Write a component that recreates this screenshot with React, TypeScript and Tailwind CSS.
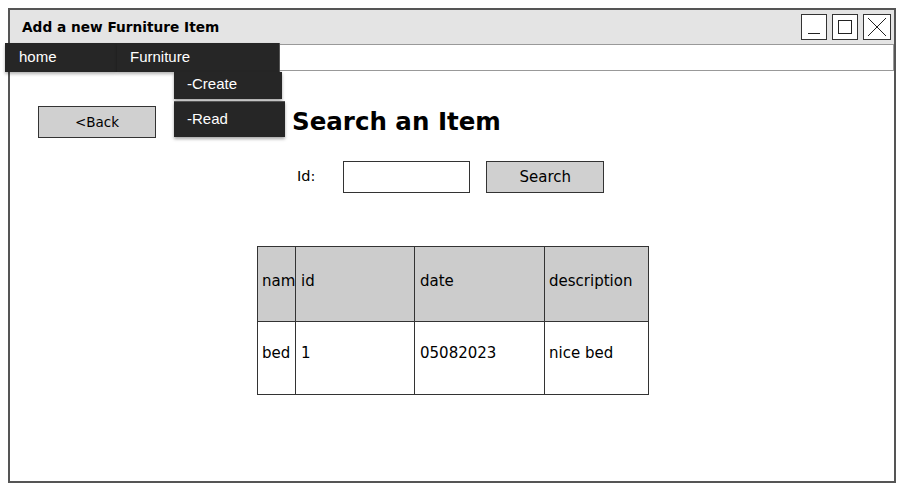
import React from "react";

const comic = { fontFamily: '"Comic Sans MS", "DejaVu Sans", sans-serif' };

const rows = [{ name: "bed", id: "1", date: "05082023", description: "nice bed" }];

const WindowButtons = () => (
  <div className="flex gap-[5px] mr-[3px]">
    <div className="w-[26px] h-[26px] border border-[#333] bg-white flex items-end justify-center pb-[5px]">
      <div className="w-[12px] h-[1px] bg-[#222]" />
    </div>
    <div className="w-[26px] h-[26px] border border-[#333] bg-white flex items-center justify-center">
      <div className="w-[14px] h-[14px] border border-[#222]" />
    </div>
    <div className="w-[28px] h-[26px] border border-[#333] bg-white flex items-center justify-center">
      <svg width="20" height="20" viewBox="0 0 20 20">
        <path d="M1 1 L19 19 M19 1 L1 19" stroke="#222" strokeWidth="1" fill="none" />
      </svg>
    </div>
  </div>
);

const App = () => {
  return (
    <main className="w-[903px] h-[490px] bg-white pt-[8px] pl-[8px] pr-[7px] pb-[7px]">
      <div className="h-[475px] border-2 border-[#555] flex flex-col">
        {/* title bar */}
        <div className="h-[34px] bg-[#e4e4e4] flex items-center justify-between pl-[12px] shrink-0">
          <span className="text-[13.7px] font-bold text-black" style={comic}>
            Add a new Furniture Item
          </span>
          <WindowButtons />
        </div>

        {/* menu bar */}
        <div
          className="relative h-[29px] flex -ml-[5px] -mt-[1px] shrink-0"
          style={{ fontFamily: '"Liberation Sans", Arial, sans-serif' }}
        >
          <div className="w-[112px] bg-[#262626] text-white text-[15px] flex items-center pl-[14px] shadow-[0_2px_3px_rgba(0,0,0,0.3)]">
            home
          </div>
          <div className="w-[163px] bg-[#262626] text-white text-[15px] flex items-center pl-[13px] border-r border-[#555] shadow-[0_2px_3px_rgba(0,0,0,0.3)]">
            Furniture
          </div>
          <div className="flex-1 border-t border-b border-r border-[#999] bg-white my-[1px]" />

          {/* dropdown */}
          <div className="absolute left-[169px] top-[29px] flex flex-col gap-[2px] z-10">
            <div className="w-[108px] h-[27px] bg-[#262626] text-white text-[15px] flex items-center pl-[13px] pb-[2px] shadow-[0_2px_3px_rgba(0,0,0,0.35)]">
              -Create
            </div>
            <div className="w-[111px] h-[36px] bg-[#262626] text-white text-[15px] flex items-start pt-[6px] pl-[13px] border-t border-[#555] shadow-[0_2px_3px_rgba(0,0,0,0.35)]">
              -Read
            </div>
          </div>
        </div>

        {/* content */}
        <div className="flex-1 flex flex-col" style={comic}>
          <div className="flex items-center mt-[32px] ml-[28px]">
            <button className="w-[118px] h-[32px] bg-[#d0d0d0] border border-[#333] text-[13.5px] text-black">
              &lt;Back
            </button>
            <h1 className="ml-[136px] text-[24.5px] font-bold text-black">Search an Item</h1>
          </div>

          <div className="flex items-center mt-[20px] ml-[287px]">
            <span className="text-[14.5px] text-black">Id:</span>
            <input className="ml-[28px] w-[127px] h-[32px] border border-[#333] bg-white outline-none" />
            <button className="ml-[16px] w-[118px] h-[32px] bg-[#d0d0d0] border border-[#333] text-[15px] text-black">
              Search
            </button>
          </div>

          <table className="mt-[53px] ml-[247px] w-[391px] border-collapse text-[15px] text-black table-fixed">
            <colgroup>
              <col className="w-[38px]" />
              <col className="w-[119px]" />
              <col className="w-[130px]" />
              <col className="w-[104px]" />
            </colgroup>
            <thead>
              <tr className="h-[75px] bg-[#cccccc]">
                <th className="border border-[#333] font-normal text-left pl-[4px] pb-[5px] overflow-hidden whitespace-nowrap">name</th>
                <th className="border border-[#333] font-normal text-left pl-[5px] pb-[5px]">id</th>
                <th className="border border-[#333] font-normal text-left pl-[5px] pb-[5px]">date</th>
                <th className="border border-[#333] font-normal text-left pl-[4px] pb-[5px] whitespace-nowrap">description</th>
              </tr>
            </thead>
            <tbody>
              {rows.map((r) => (
                <tr key={r.id} className="h-[73px]">
                  <td className="border border-[#333] pl-[4px] pb-[10px]">{r.name}</td>
                  <td className="border border-[#333] pl-[5px] pb-[10px]">{r.id}</td>
                  <td className="border border-[#333] pl-[5px] pb-[10px]">{r.date}</td>
                  <td className="border border-[#333] pl-[4px] pb-[10px]">{r.description}</td>
                </tr>
              ))}
            </tbody>
          </table>
        </div>
      </div>
    </main>
  );
};

export default App;
